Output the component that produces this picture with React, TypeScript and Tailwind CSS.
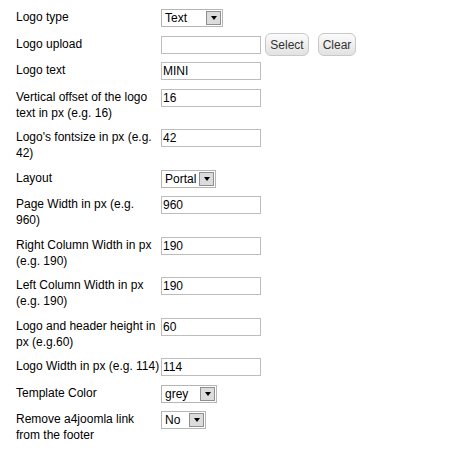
type Field =
  | { label: string; kind: "input"; value: string }
  | { label: string; kind: "select"; value: string; width: string }
  | { label: string; kind: "upload" };

const fields: Field[] = [
  { label: "Logo type", kind: "select", value: "Text", width: "w-[62px]" },
  { label: "Logo upload", kind: "upload" },
  { label: "Logo text", kind: "input", value: "MINI" },
  { label: "Vertical offset of the logo text in px (e.g. 16)", kind: "input", value: "16" },
  { label: "Logo's fontsize in px (e.g. 42)", kind: "input", value: "42" },
  { label: "Layout", kind: "select", value: "Portal", width: "w-[55px]" },
  { label: "Page Width in px (e.g. 960)", kind: "input", value: "960" },
  { label: "Right Column Width in px (e.g. 190)", kind: "input", value: "190" },
  { label: "Left Column Width in px (e.g. 190)", kind: "input", value: "190" },
  { label: "Logo and header height in px (e.g.60)", kind: "input", value: "60" },
  { label: "Logo Width in px (e.g. 114)", kind: "input", value: "114" },
  { label: "Template Color", kind: "select", value: "grey", width: "w-[56px]" },
  { label: "Remove a4joomla link from the footer", kind: "select", value: "No", width: "w-[45px]" },
];

function TextBox({ value = "" }: { value?: string }) {
  return (
    <div className="h-[18px] w-[100px] border border-[#bdbdbd] bg-white pl-[1px] text-[12px] leading-4 text-black">
      {value}
    </div>
  );
}

function Dropdown({ value, width }: { value: string; width: string }) {
  return (
    <div className={`flex h-[18px] items-stretch border border-[#b5b5b5] bg-white ${width}`}>
      <span className="min-w-0 flex-1 overflow-hidden whitespace-nowrap pl-[3px] text-[12px] leading-4 text-black">
        {value}
      </span>
      <span className="my-px mr-px flex w-[15px] shrink-0 items-center justify-center border border-[#8f8f8f] bg-[#dcdcdc]">
        <span className="h-0 w-0 border-x-[3.5px] border-t-[4px] border-x-transparent border-t-black" />
      </span>
    </div>
  );
}

function Btn({ children, width }: { children: string; width: string }) {
  return (
    <button
      className={`-my-1 h-[23px] rounded-[6px] border border-[#c8c8c8] bg-gradient-to-b from-[#fbfbfb] to-[#e2e2e2] text-[12px] text-[#333] ${width}`}
    >
      {children}
    </button>
  );
}

export default function App() {
  return (
    <div className="min-h-screen bg-white pt-[5px] pl-4 font-['Liberation_Sans',Arial,sans-serif] text-[12px] text-black">
      {fields.map((f) => (
        <div key={f.label} className="flex items-start pt-1 pb-[4.5px]">
          <div className="w-[145px] shrink-0 leading-4">{f.label}</div>
          {f.kind === "input" && <TextBox value={f.value} />}
          {f.kind === "select" && <Dropdown value={f.value} width={f.width} />}
          {f.kind === "upload" && (
            <div className="flex items-center">
              <TextBox />
              <div className="ml-1 flex gap-[9px]">
                <Btn width="w-[44px]">Select</Btn>
                <Btn width="w-[38px]">Clear</Btn>
              </div>
            </div>
          )}
        </div>
      ))}
    </div>
  );
}
